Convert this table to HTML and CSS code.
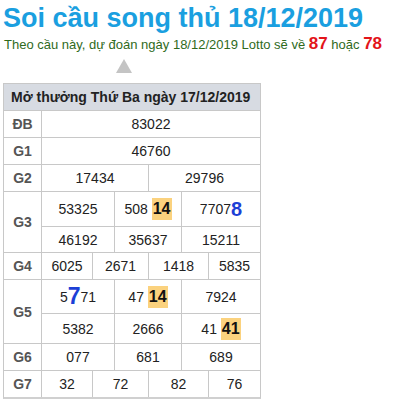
FILE: index.html
```html
<!DOCTYPE html>
<html lang="vi">
<head>
<meta charset="utf-8">
<title>Soi cầu song thủ 18/12/2019</title>
<link rel="stylesheet" href="styles.css">
</head>
<body>
<div class="page">
  <h1 class="title">Soi cầu song thủ 18/12/2019</h1>
  <p class="sub">Theo cầu này, dự đoán ngày 18/12/2019 Lotto sẽ về <b class="red">87</b> hoặc <b class="red">78</b></p>
  <div class="arrow"></div>
  <div class="tbl">
    <div class="head">Mở thưởng Thứ Ba ngày 17/12/2019</div>
    <div class="row">
      <div class="lbl">ĐB</div>
      <div class="cells c1"><div class="cell">83022</div></div>
    </div>
    <div class="row">
      <div class="lbl">G1</div>
      <div class="cells c1"><div class="cell">46760</div></div>
    </div>
    <div class="row">
      <div class="lbl">G2</div>
      <div class="cells c2"><div class="cell">17434</div><div class="cell">29796</div></div>
    </div>
    <div class="row">
      <div class="lbl">G3</div>
      <div class="cells c3 g3">
        <div class="cell">53325</div>
        <div class="cell">508 <span class="hl">14</span></div>
        <div class="cell">7707<span class="big8">8</span></div>
        <div class="cell">46192</div>
        <div class="cell">35637</div>
        <div class="cell">15211</div>
      </div>
    </div>
    <div class="row">
      <div class="lbl">G4</div>
      <div class="cells c4"><div class="cell">6025</div><div class="cell">2671</div><div class="cell">1418</div><div class="cell">5835</div></div>
    </div>
    <div class="row">
      <div class="lbl">G5</div>
      <div class="cells c3 g5">
        <div class="cell">5<span class="big7">7</span>71</div>
        <div class="cell">47 <span class="hl">14</span></div>
        <div class="cell">7924</div>
        <div class="cell">5382</div>
        <div class="cell">2666</div>
        <div class="cell">41 <span class="hl">41</span></div>
      </div>
    </div>
    <div class="row">
      <div class="lbl">G6</div>
      <div class="cells c3"><div class="cell">077</div><div class="cell">681</div><div class="cell">689</div></div>
    </div>
    <div class="row">
      <div class="lbl">G7</div>
      <div class="cells c4"><div class="cell">32</div><div class="cell">72</div><div class="cell">82</div><div class="cell">76</div></div>
    </div>
  </div>
</div>
</body>
</html>
```
FILE: styles.css
```css
html, body {
  margin: 0;
  padding: 0;
  background: #fff;
}
body {
  font-family: "Liberation Sans", Arial, sans-serif;
  color: #222;
}
.page {
  padding: 3px 0 0 3px;
}
.title {
  margin: 0;
  font-size: 27px;
  line-height: 30px;
  height: 30px;
  font-weight: bold;
  color: #1a9fe0;
  white-space: nowrap;
}
.sub {
  margin: 1px 0 0 1px;
  height: 20px;
  font-size: 13px;
  line-height: 20px;
  color: #2f6a1c;
  white-space: nowrap;
}
.sub .red {
  color: #e3141a;
  font-size: 17px;
}
.arrow {
  width: 0;
  height: 0;
  margin: 5px 0 0 113px;
  border-left: 8px solid transparent;
  border-right: 8px solid transparent;
  border-bottom: 14px solid #c4c4c4;
}
.tbl {
  margin-top: 10px;
  width: 256px;
  border: 1px solid #c8c8c8;
  border-bottom-width: 2px;
  border-bottom-color: #d0d0d0;
  background: #c8c8c8;
  display: grid;
  gap: 1px;
}
.head {
  background: #d7dbe2;
  height: 26px;
  line-height: 26px;
  padding-left: 7px;
  font-size: 14px;
  font-weight: bold;
  color: #222;
}
.row {
  display: grid;
  grid-template-columns: 37px 1fr;
  gap: 1px;
}
.lbl {
  background: #fff;
  display: flex;
  align-items: center;
  justify-content: center;
  font-size: 14px;
  font-weight: bold;
  color: #555;
  min-height: 26px;
}
.cells {
  display: grid;
  gap: 1px;
  grid-auto-rows: 26px;
}
.c1 { grid-template-columns: 1fr; }
.c2 { grid-template-columns: 106px 1fr; }
.c3 { grid-template-columns: 72px 66px 1fr; }
.c4 { grid-template-columns: 50px 55px 59px 1fr; }
.g3 { grid-template-rows: 34px 25px; }
.g5 { grid-template-rows: 33px 29px; }
.cell {
  background: #fff;
  display: flex;
  align-items: center;
  justify-content: center;
  font-size: 14px;
  color: #222;
  white-space: pre;
}
.hl {
  display: inline-block;
  background: #fbd27e;
  font-weight: bold;
  font-size: 16px;
  line-height: 22px;
  padding: 0 1px;
  color: #111;
}
.big8 {
  font-size: 20px;
  font-weight: bold;
  color: #1c3fd6;
}
.big7 {
  font-size: 23px;
  font-weight: bold;
  color: #1c3fd6;
}
```
